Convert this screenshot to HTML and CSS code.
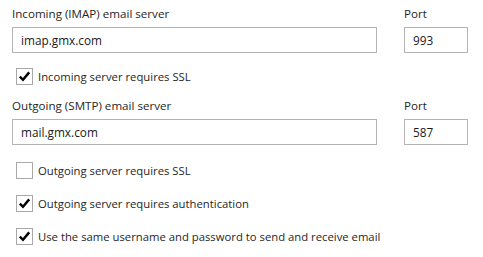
FILE: index.html
```html
<!DOCTYPE html>
<html>
<head>
<meta charset="utf-8">
<link rel="stylesheet" href="styles.css">
</head>
<body>
<div class="form">
  <div class="fields">
    <div class="field server">
      <div class="label">Incoming (IMAP) email server</div>
      <div class="input">imap.gmx.com</div>
    </div>
    <div class="field port">
      <div class="label">Port</div>
      <div class="input">993</div>
    </div>
  </div>
  <div class="check checked first"><span class="box"><svg viewBox="0 0 17 17"><path d="M3.2 8.6 L6.8 12.2 L13.8 3.8" /></svg></span><span class="text">Incoming server requires SSL</span></div>

  <div class="fields second">
    <div class="field server">
      <div class="label">Outgoing (SMTP) email server</div>
      <div class="input">mail.gmx.com</div>
    </div>
    <div class="field port">
      <div class="label">Port</div>
      <div class="input">587</div>
    </div>
  </div>
  <div class="check after-second"><span class="box"></span><span class="text">Outgoing server requires SSL</span></div>
  <div class="check checked"><span class="box"><svg viewBox="0 0 17 17"><path d="M3.2 8.6 L6.8 12.2 L13.8 3.8" /></svg></span><span class="text">Outgoing server requires authentication</span></div>
  <div class="check checked"><span class="box"><svg viewBox="0 0 17 17"><path d="M3.2 8.6 L6.8 12.2 L13.8 3.8" /></svg></span><span class="text">Use the same username and password to send and receive email</span></div>
</div>
</body>
</html>
```

FILE: styles.css
```css
html, body {
  margin: 0;
  background: #ffffff;
}
body {
  font-family: "Open Sans", "Noto Sans", sans-serif;
  font-size: 11.6px;
  color: #262626;
}
.form {
  padding: 5px 0 0 12px;
}
.fields {
  display: flex;
  gap: 27px;
}
.fields.second {
  margin-top: 4px;
}
.label {
  height: 17px;
  line-height: 17px;
  margin-bottom: 5px;
}
.server { width: 365px; }
.port { width: 64px; }
.input {
  box-sizing: border-box;
  height: 26px;
  border: 1px solid #b4b4b4;
  padding: 0 8px;
  line-height: 24px;
  font-size: 11.8px;
  color: #1a1a1a;
}
.check {
  display: flex;
  align-items: center;
  height: 33px;
  padding-left: 4px;
}
.check.first {
  margin-top: 7px;
}
.check.after-second {
  margin-top: 9px;
}
.box {
  box-sizing: border-box;
  width: 17px;
  height: 17px;
  border: 1px solid #a8a8a8;
  margin-right: 5px;
  display: flex;
}
.box svg {
  width: 15px;
  height: 15px;
}
.box path {
  fill: none;
  stroke: #000;
  stroke-width: 2.8;
}
.text {
  font-size: 11.3px;
}
```
